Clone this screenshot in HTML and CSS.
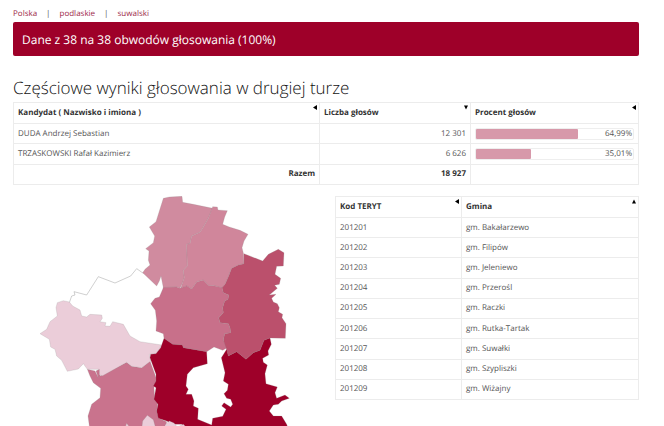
FILE: index.html
```html
<!DOCTYPE html>
<html lang="pl">
<head>
<meta charset="utf-8">
<meta name="viewport" content="width=device-width, initial-scale=1">
<title>Wyniki głosowania – powiat suwalski</title>
<link rel="stylesheet" href="styles.css">
</head>
<body>
<nav class="crumbs">
  <a href="#">Polska</a><span>|</span><a href="#">podlaskie</a><span>|</span><a href="#">suwalski</a>
</nav>
<main>
  <p class="banner">Dane z 38 na 38 obwodów głosowania (100%)</p>
  <h1>Częściowe wyniki głosowania w drugiej turze</h1>

  <table class="results">
    <colgroup><col><col class="col-votes"><col class="col-share"></colgroup>
    <thead>
      <tr>
        <th><button type="button">Kandydat ( Nazwisko i imiona )<svg viewBox="0 0 4 5"><path d="M4 0V5L0 2.5z"/></svg></button></th>
        <th><button type="button">Liczba głosów<svg viewBox="0 0 4 5"><path d="M0 0.5H4L2 4.5z"/></svg></button></th>
        <th><button type="button">Procent głosów<svg viewBox="0 0 4 5"><path d="M4 0V5L0 2.5z"/></svg></button></th>
      </tr>
    </thead>
    <tbody>
      <tr>
        <td>DUDA Andrzej Sebastian</td>
        <td class="num">12 301</td>
        <td><div class="bar"><div class="fill" style="width:64.99%"></div><span>64,99%</span></div></td>
      </tr>
      <tr>
        <td>TRZASKOWSKI Rafał Kazimierz</td>
        <td class="num">6 626</td>
        <td><div class="bar"><div class="fill" style="width:35.01%"></div><span>35,01%</span></div></td>
      </tr>
      <tr class="total">
        <td class="num">Razem</td>
        <td class="num">18 927</td>
        <td></td>
      </tr>
    </tbody>
  </table>

  <div class="split">
    <svg class="map" viewBox="-381 15 912 693" role="img" aria-label="Mapa gmin powiatu suwalskiego">
      <path class="outline" d="M-212 335L-205 315L-195 312L-198 302L-160 312L-125 257L-75 276L-28 255L-10 233L10 247"/>
      <path fill="#d08b9f" d="M70 22L88 18L126 16L128 34L160 40L218 52L206 80L188 112L180 124L155 135L150 158L140 160L142 225L130 238L133 260L128 275L120 292L110 288L70 290L63 255L58 270L50 285L8 245L15 235L30 222L25 208L27 180L17 173L40 155L44 135L28 108L48 92z"/>
      <path fill="#d0869b" d="M218 47L232 48L234 57L262 59L254 78L248 100L268 108L300 118L324 130L312 150L306 170L311 190L312 218L295 222L275 232L266 255L255 280L246 292L222 284L205 283L190 267L170 273L155 294L140 285L122 292L133 260L130 238L142 225L140 160L150 158L155 135L180 124L188 112L206 80z"/>
      <path fill="#c8708a" d="M70 289L110 288L120 292L140 284L155 294L170 273L190 267L205 283L222 284L246 290L250 305L266 312L264 325L254 330L248 350L250 365L236 380L240 395L265 398L270 410L272 425L254 428L250 448L262 470L248 478L222 468L200 482L130 470L127 462L98 460L72 442L70 428L48 420L50 390L46 358L32 338L45 322L58 318L68 295z"/>
      <path fill="#bb506c" d="M312 188L368 210L385 190L415 175L432 185L430 225L410 226L405 250L422 262L418 280L404 283L412 292L388 312L408 310L395 322L400 333L412 338L418 350L415 362L428 370L426 380L438 398L436 442L390 441L372 448L360 478L340 485L318 505L290 482L265 495L258 470L250 448L254 428L272 425L270 410L265 398L240 395L236 380L250 365L248 350L254 330L264 325L266 312L250 305L246 290L255 280L266 255L275 232L295 222L312 218z"/>
      <g transform="translate(-330 330)">
        <path fill="#c9738d" d="M172 205L195 210L205 230L198 210L210 203L210 225L290 184L305 196L335 200L360 180L380 235L372 260L374 290L384 300L380 330L386 352L410 362L405 390L180 390L174 345L185 310L210 290L212 262L190 245L180 225z"/>
        <path fill="#ebcdd9" d="M82 5L100 -1L118 3L128 15L150 27L155 45L170 48L180 40L215 42L217 52L210 62L228 65L225 75L240 76L248 62L280 70L300 105L330 122L395 132L380 158L358 160L362 180L335 200L305 196L290 184L218 224L208 222L208 205L172 205L160 188L145 204L112 211L95 178L80 165L75 145L62 138L58 115L30 98L50 85L60 62L82 45L78 20z"/>
        <path fill="#ebcdd9" d="M285 380L290 367L300 380zM338 360L352 343L370 356L378 385L335 385z"/>
      </g>
      <path fill="#9e0029" d="M72 442L98 460L127 462L130 470L200 482L202 518L160 530L142 550L138 585L145 595L138 610L155 610L162 630L160 645L175 652L173 685L215 702L218 682L248 676L258 655L245 645L252 635L272 648L278 640L272 625L260 622L252 608L262 598L265 580L250 570L255 545L244 500L260 475L265 495L290 482L318 505L340 485L360 478L372 448L390 441L394 460L384 480L386 492L368 502L370 514L382 522L375 548L378 578L412 588L405 605L410 622L435 612L448 622L425 630L415 640L400 642L388 660L400 675L425 675L440 700L446 715L140 715L125 700L100 700L80 690L55 682L50 660L54 640L42 625L48 590L40 585L48 570L48 550L30 500L32 490L48 488L62 470z"/>
      <path fill="#ebcdd9" d="M75 712L75 702L88 690L102 696L112 708L130 700L142 712z"/>
    </svg>

    <table class="communes">
      <colgroup><col class="col-code"><col></colgroup>
      <thead>
        <tr>
          <th><button type="button">Kod TERYT<svg viewBox="0 0 4 5"><path d="M4 0V5L0 2.5z"/></svg></button></th>
          <th><button type="button">Gmina<svg viewBox="0 0 4 5"><path d="M0 4.5H4L2 0.5z"/></svg></button></th>
        </tr>
      </thead>
      <tbody>
        <tr><td>201201</td><td>gm. Bakałarzewo</td></tr>
        <tr><td>201202</td><td>gm. Filipów</td></tr>
        <tr><td>201203</td><td>gm. Jeleniewo</td></tr>
        <tr><td>201204</td><td>gm. Przerośl</td></tr>
        <tr><td>201205</td><td>gm. Raczki</td></tr>
        <tr><td>201206</td><td>gm. Rutka-Tartak</td></tr>
        <tr><td>201207</td><td>gm. Suwałki</td></tr>
        <tr><td>201208</td><td>gm. Szypliszki</td></tr>
        <tr><td>201209</td><td>gm. Wiżajny</td></tr>
      </tbody>
    </table>
  </div>
</main>
</body>
</html>
```
FILE: styles.css
```css
* { box-sizing: border-box; }
body {
  margin: 0;
  padding: 8px 25px 0 13px;
  background: #fff;
  color: #555;
  font: 8px/10px "Open Sans", "Noto Sans", sans-serif;
  text-rendering: geometricPrecision;
}
.crumbs { display: flex; gap: 9px; padding-top: 1px; margin-bottom: 3px; }
.crumbs a { color: #9c2848; text-decoration: none; }
.banner {
  margin: 0;
  padding: 10px 9px 8px;
  border-radius: 2px;
  background: #9e0029;
  color: #fff;
  font-size: 12px;
  line-height: 16px;
}
h1 {
  margin: 20px 0 2px;
  color: #111;
  font-size: 17px;
  font-weight: 300;
  line-height: 24px;
}
table {
  width: 100%;
  border-collapse: collapse;
  table-layout: fixed;
}
th, td {
  height: 20px;
  padding: 0 4px;
  border: 1px solid #ececec;
  text-align: left;
  vertical-align: middle;
}
.results { height: 83px; }
.communes { height: 204px; }
.col-votes { width: 151px; }
.col-share { width: 168px; }
.col-code { width: 126px; }
th { height: 21px; padding-right: 2px; }
th button {
  display: flex;
  justify-content: space-between;
  width: 100%;
  padding: 0;
  border: 0;
  background: none;
  color: #333;
  font: inherit;
  font-weight: 700;
  text-rendering: inherit;
  cursor: pointer;
}
th svg { width: 4px; height: 5px; fill: #000; margin-top: -3px; }
.num { text-align: right; }
.total { color: #333; font-weight: 700; }
.bar {
  display: flex;
  position: relative;
  justify-content: flex-end;
  padding: 0 1px;
  border: 1px solid #eee;
  border-radius: 2px;
}
.fill {
  position: absolute;
  inset: 0 auto 0 0;
  border-radius: 1px;
  background: #d799aa;
}
.bar span { position: relative; }
.split {
  display: grid;
  grid-template-columns: 1fr 1fr;
  align-items: start;
  gap: 18px;
  margin-top: 11px;
}
.map { display: block; width: 100%; }
.map path { stroke: #8a8a8a; stroke-opacity: .3; stroke-width: 2; }
.map .outline { fill: none; stroke: #999; stroke-opacity: .7; }
```
